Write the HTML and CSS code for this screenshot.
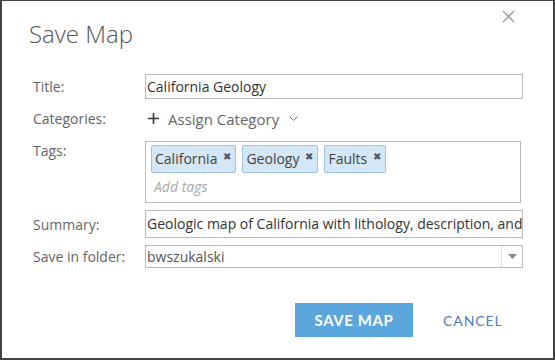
FILE: index.html
```html
<!DOCTYPE html>
<html lang="en">
<head>
  <meta charset="UTF-8">
  <title>Save Map</title>
  <link rel="stylesheet" href="styles.css">
</head>
<body>

  <div class="dialog">
    <button class="close-btn" aria-label="Close">
      <svg width="13" height="13" viewBox="0 0 13 13"><path d="M1 1 L12 12 M12 1 L1 12" stroke="#9a9a9a" stroke-width="1.4" fill="none"/></svg>
    </button>

    <h2 class="dialog-title">Save Map</h2>

    <div class="form">
      <div class="row">
        <label class="label">Title:</label>
        <div class="field input">California Geology</div>
      </div>

      <div class="row">
        <label class="label">Categories:</label>
        <div class="category">
          <svg width="11" height="11" viewBox="0 0 11 11"><path d="M5.5 0 V11 M0 5.5 H11" stroke="#333" stroke-width="1.6"/></svg>
          <span class="category-text">Assign Category</span>
          <svg class="chevron" width="9" height="6" viewBox="0 0 9 6"><path d="M0.5 0.5 L4.5 4.5 L8.5 0.5" stroke="#777" stroke-width="1" fill="none"/></svg>
        </div>
      </div>

      <div class="row row-top">
        <label class="label">Tags:</label>
        <div class="field tags">
          <div class="tag-list">
            <span class="tag">California <span class="tag-x">&#x2716;</span></span>
            <span class="tag">Geology <span class="tag-x">&#x2716;</span></span>
            <span class="tag">Faults <span class="tag-x">&#x2716;</span></span>
          </div>
          <div class="tag-placeholder">Add tags</div>
        </div>
      </div>

      <div class="row">
        <label class="label">Summary:</label>
        <div class="field input summary">Geologic map of California with lithology, description, and geologic age</div>
      </div>

      <div class="row">
        <label class="label">Save in folder:</label>
        <div class="field select">
          <span class="select-text">bwszukalski</span>
          <span class="select-arrow">
            <svg width="9" height="5" viewBox="0 0 9 5"><path d="M0 0 H9 L4.5 5 Z" fill="#888"/></svg>
          </span>
        </div>
      </div>
    </div>

    <div class="actions">
      <button class="btn-save">SAVE MAP</button>
      <button class="btn-cancel">CANCEL</button>
    </div>
  </div>

</body>
</html>
```

FILE: styles.css
```css
body {
  margin: 0;
  padding: 0;
  font-family: "Open Sans", Lato, sans-serif;
  background-color: #fff;
}

.dialog {
  position: relative;
  box-sizing: border-box;
  width: 555px;
  height: 360px;
  border: 2px solid #444;
  border-top-width: 1px;
  background-color: #fff;
  padding: 0 30px 0 31px;
}

.close-btn {
  position: absolute;
  top: 9px;
  right: 38px;
  border: none;
  background: none;
  padding: 0;
  cursor: pointer;
}

.dialog-title {
  margin: 0 0 0 -4px;
  padding-top: 19px;
  font-size: 24px;
  font-weight: 300;
  color: #555;
  height: 52px;
  box-sizing: border-box;
  line-height: 28px;
}

.form {
  display: flex;
  flex-direction: column;
  gap: 7px;
  padding-top: 21px;
}

.row {
  display: flex;
  align-items: center;
}

.row-top {
  align-items: flex-start;
  margin-top: 3px;
}

.label {
  width: 112px;
  flex-shrink: 0;
  font-size: 14px;
  color: #666;
}

.field {
  box-sizing: border-box;
  border: 1px solid #bbb;
  background-color: #fff;
  font-size: 14px;
  color: #333;
}

.input {
  width: 379px;
  height: 25px;
  line-height: 23px;
  padding: 0 1px;
  white-space: nowrap;
  overflow: hidden;
  text-overflow: clip;
}

.summary {
  height: 28px;
  line-height: 26px;
}

.category {
  display: flex;
  align-items: center;
  height: 25px;
  padding-left: 3px;
}

.category-text {
  font-size: 15px;
  color: #666;
  margin-left: 9px;
}

.chevron {
  margin-left: 10px;
}

.tags {
  width: 376px;
  height: 62px;
  padding: 3px 5px;
}

.tag-list {
  display: flex;
  gap: 6px;
}

.tag {
  display: inline-flex;
  align-items: center;
  height: 28px;
  box-sizing: border-box;
  padding: 0 4px 2px 3px;
  background-color: #d3e7f6;
  border: 1px solid #9cc3e2;
  border-radius: 2px;
  font-size: 14px;
  color: #444;
}

.tag-x {
  font-size: 10px;
  color: #555;
  margin-left: 6px;
  margin-top: -5px;
}

.tag-placeholder {
  padding: 4px 0 0 3px;
  font-size: 14px;
  font-style: italic;
  color: #aaa;
}

.select {
  display: flex;
  width: 378px;
  height: 23px;
}

.select-text {
  flex: 1;
  padding-left: 1px;
  line-height: 21px;
  color: #555;
}

.select-arrow {
  width: 20px;
  border-left: 1px solid #ddd;
  display: flex;
  align-items: center;
  justify-content: center;
}

.actions {
  display: flex;
  align-items: center;
  padding: 35px 0 0 262px;
}

.btn-save {
  width: 118px;
  height: 34px;
  border: none;
  background-color: #5ba6dc;
  color: #fff;
  font-family: Lato, sans-serif;
  font-weight: 700;
  font-size: 15px;
  letter-spacing: 0.6px;
  cursor: pointer;
}

.btn-cancel {
  margin-left: 30px;
  border: none;
  background: none;
  padding: 0;
  color: #4a80bb;
  font-family: Lato, sans-serif;
  font-size: 14px;
  letter-spacing: 0.9px;
  cursor: pointer;
}
```
